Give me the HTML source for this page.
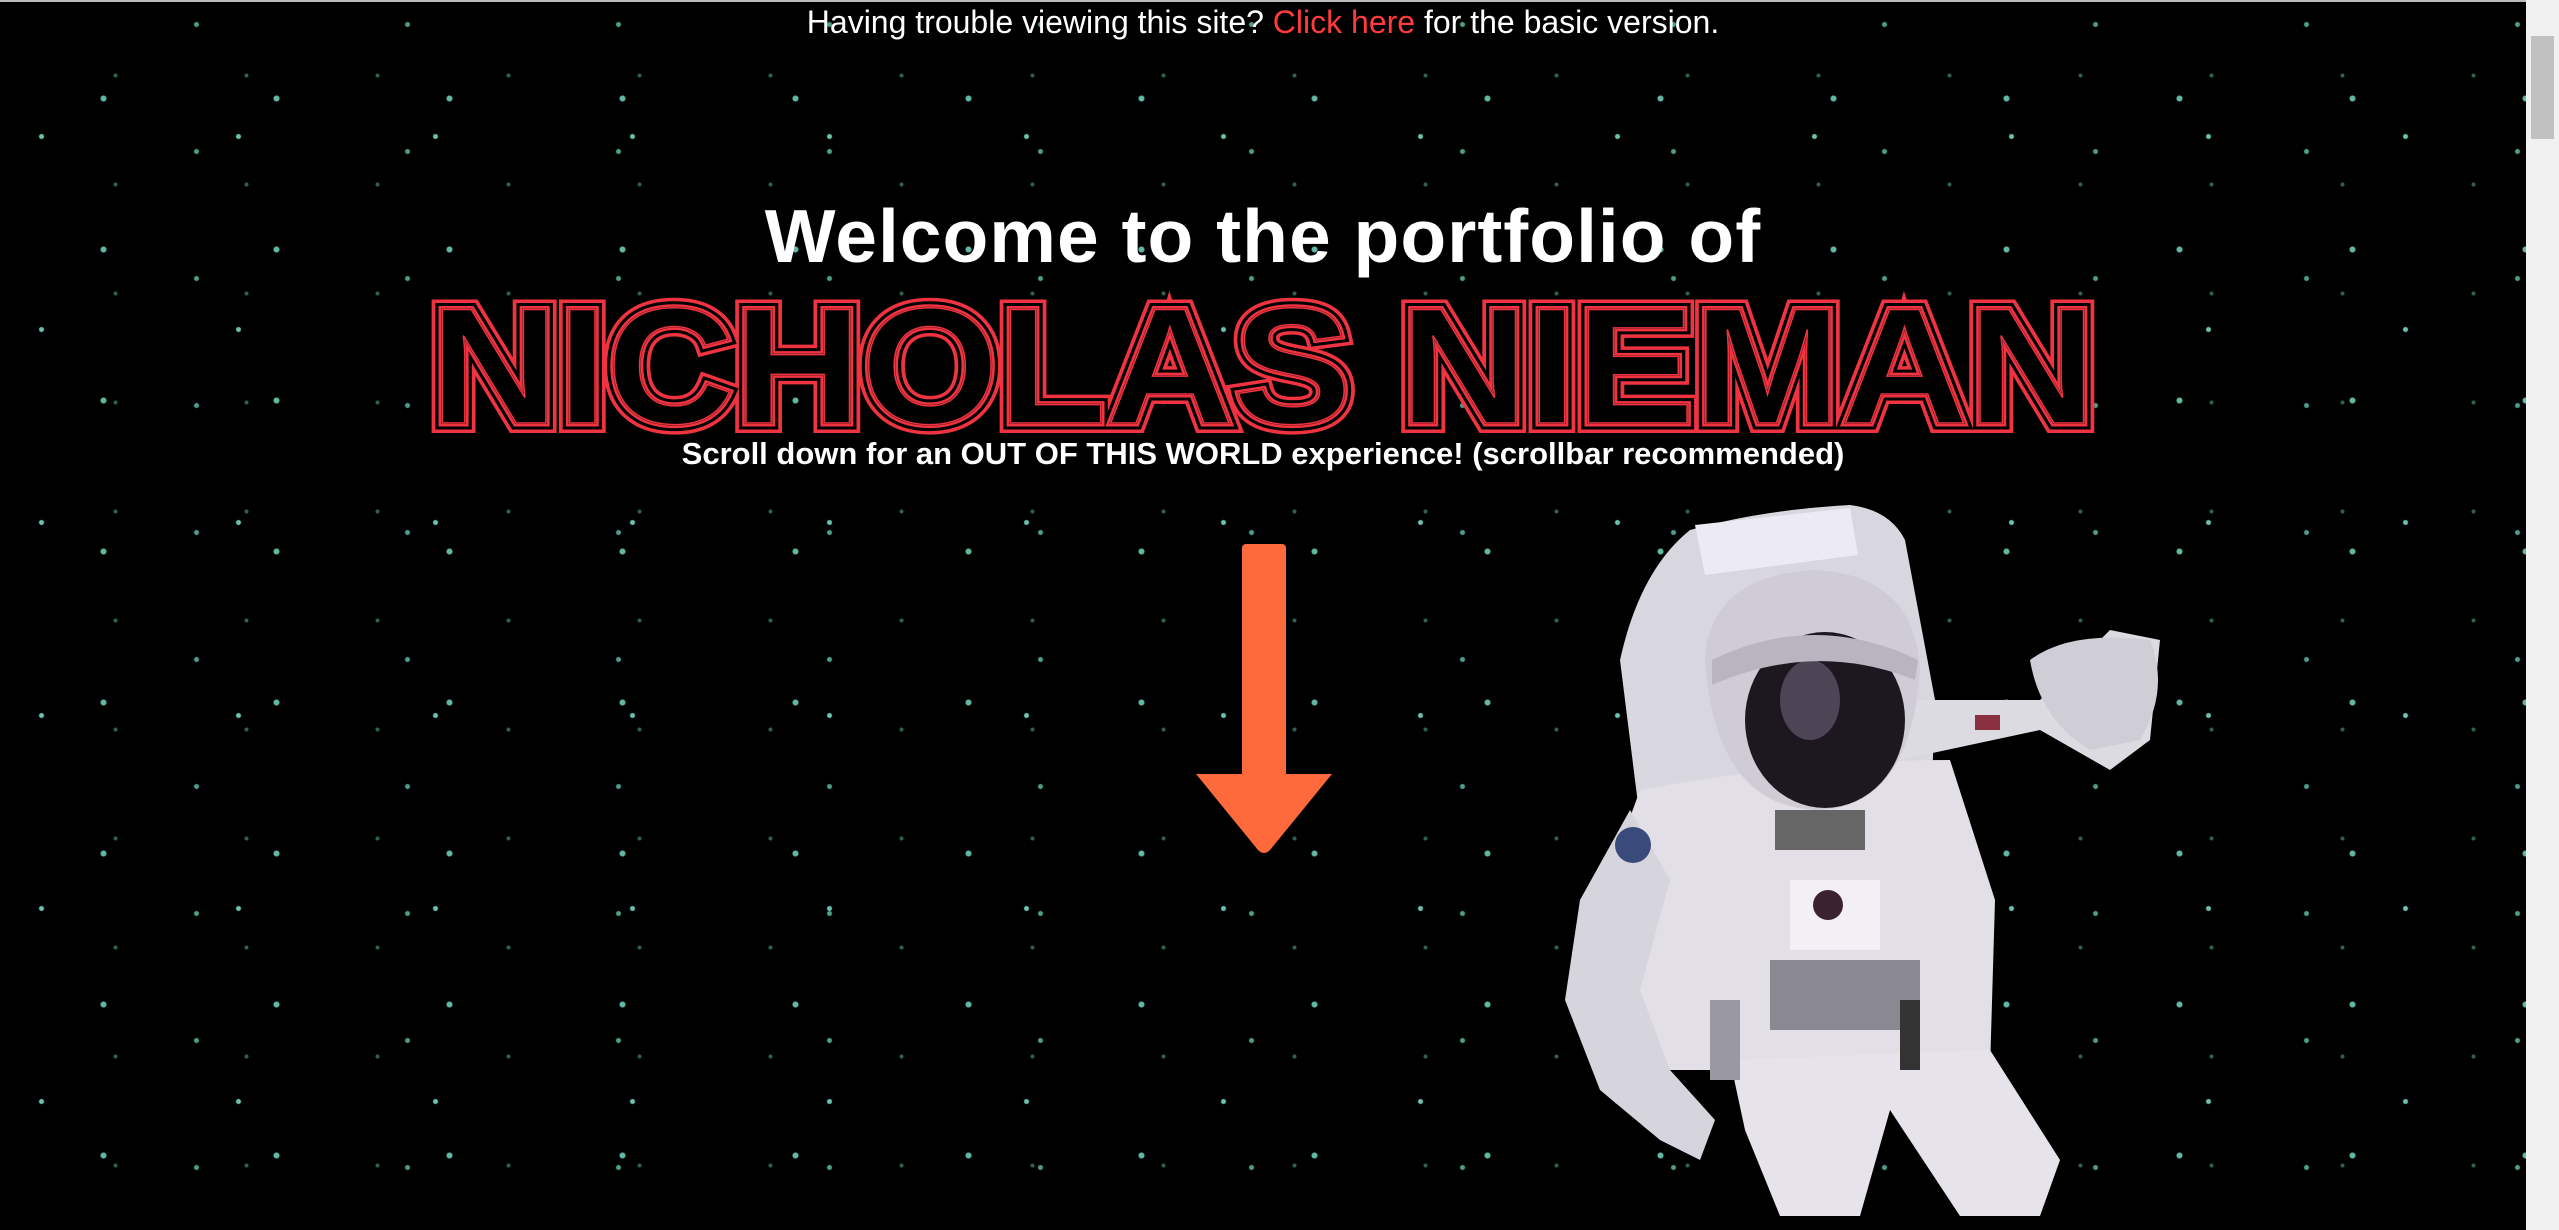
<!DOCTYPE html>
<html><head><meta charset="utf-8">
<style>
html,body{margin:0;padding:0;width:2559px;height:1230px;overflow:hidden;background:#000;}
body{position:relative;font-family:"Liberation Sans",sans-serif;}
.stars{position:absolute;left:0;top:0;width:2526px;height:1230px;
background:
radial-gradient(circle,#5fb7a4 0 2.5px,transparent 3.5px) 17px 23px/173px 151px,
radial-gradient(circle,#4e9d8c 0 2px,transparent 3px) 91px 88px/211px 127px,
radial-gradient(circle,#6cc2b0 0 2px,transparent 3px) 140px 40px/197px 193px,
radial-gradient(circle,#2f6256 0 1.5px,transparent 2.5px) 50px 130px/131px 109px,
#000;}
.top{position:absolute;top:0;left:0;width:2526px;height:2px;background:#bbb}
.notice{position:absolute;top:2px;left:0;width:2526px;text-align:center;color:#fff;font-size:32px;line-height:40px;}
.notice span{color:#ff3b3b}
.welcome{position:absolute;top:193px;left:0;width:2526px;text-align:center;color:#fff;font-size:75px;font-weight:bold;letter-spacing:1px;}
.sub{position:absolute;top:436px;left:0;width:2526px;text-align:center;color:#fff;font-size:31px;font-weight:bold;}
.sb{position:absolute;right:0;top:0;width:33px;height:1230px;background:#f1f1f1;}
.sb .th{position:absolute;left:5px;top:36px;width:23px;height:103px;background:#c1c1c1;}
</style></head><body>
<div class="stars"></div>
<div class="top"></div>
<div class="notice">Having trouble viewing this site? <span>Click here</span> for the basic version.</div>
<div class="welcome">Welcome to the portfolio of</div>
<svg style="position:absolute;left:0;top:0" width="2526" height="1230">
 <g font-family="Liberation Sans,sans-serif" font-weight="bold" font-size="165" text-anchor="middle">
  <text x="1263" y="423" textLength="1665" lengthAdjust="spacingAndGlyphs" fill="none" stroke="#ef3340" stroke-width="20">NICHOLAS NIEMAN</text>
  <text x="1263" y="423" textLength="1665" lengthAdjust="spacingAndGlyphs" fill="none" stroke="#000" stroke-width="13">NICHOLAS NIEMAN</text>
  <text x="1263" y="423" textLength="1665" lengthAdjust="spacingAndGlyphs" fill="none" stroke="#ef3340" stroke-width="7">NICHOLAS NIEMAN</text>
  <text x="1263" y="423" textLength="1665" lengthAdjust="spacingAndGlyphs" fill="#000" stroke="#000" stroke-width="2">NICHOLAS NIEMAN</text>
  <text x="1263" y="423" textLength="1665" lengthAdjust="spacingAndGlyphs" fill="none" stroke="#ef3340" stroke-width="1.5">NICHOLAS NIEMAN</text>
 </g>
 <rect x="1242" y="544" width="44" height="240" rx="4" fill="#ff6a3d"/>
 <path d="M1196 774 L1332 774 L1270 850 Q1264 856 1258 850 Z" fill="#ff6a3d"/>
 <g>
  <path d="M1690 530 Q1760 510 1850 505 Q1890 510 1905 540 L1935 700 L1930 840 L1640 820 L1620 660 Q1640 570 1690 530 Z" fill="#d8d6de"/>
  <path d="M1695 525 L1850 508 L1858 555 L1705 575 Z" fill="#eceaf2"/>
  <path d="M1640 790 Q1800 760 1950 760 L1995 900 L1990 1070 L1660 1070 L1600 900 Z" fill="#e2e0e6"/>
  <path d="M1900 760 L2040 730 L2110 770 L2150 740 L2160 640 L2110 630 L2040 700 L1890 700 Z" fill="#dddbe2"/>
  <path d="M2030 660 Q2070 630 2150 640 Q2170 690 2140 740 L2090 750 Q2040 720 2030 660Z" fill="#cfcdd6"/>
  <path d="M1630 810 L1580 900 L1565 1000 L1600 1090 L1660 1140 L1700 1160 L1715 1120 L1670 1070 L1640 990 L1670 880 Z" fill="#d6d4dc"/>
  <path d="M1730 1060 L1990 1050 L2060 1160 L2040 1216 L1960 1216 L1890 1110 L1860 1216 L1780 1216 L1745 1130 Z" fill="#e6e4ea"/>
  <path d="M1705 660 Q1710 575 1815 570 Q1915 575 1920 670 Q1910 810 1815 810 Q1715 805 1705 660Z" fill="#cfccd6"/>
  <ellipse cx="1825" cy="720" rx="80" ry="88" fill="#1d1820"/>
  <ellipse cx="1810" cy="700" rx="30" ry="40" fill="#4d4456"/>
  <path d="M1712 660 Q1815 610 1918 660 L1915 680 Q1815 640 1712 685Z" fill="#b8b5c0"/>
  <rect x="1790" y="880" width="90" height="70" fill="#f2f0f4"/>
  <circle cx="1828" cy="905" r="15" fill="#3a2230"/>
  <rect x="1775" y="810" width="90" height="40" fill="#666"/>
  <rect x="1770" y="960" width="150" height="70" fill="#8a8890"/>
  <rect x="1900" y="1000" width="20" height="70" fill="#333"/>
  <rect x="1710" y="1000" width="30" height="80" fill="#9a98a0"/>
  <circle cx="1633" cy="845" r="18" fill="#3a4a7a"/>
  <rect x="1975" y="715" width="25" height="15" fill="#8a3040"/>
 </g>
</svg>
<div class="sub">Scroll down for an OUT OF THIS WORLD experience! (scrollbar recommended)</div>
<div class="sb"><div class="th"></div></div>
</body></html>
